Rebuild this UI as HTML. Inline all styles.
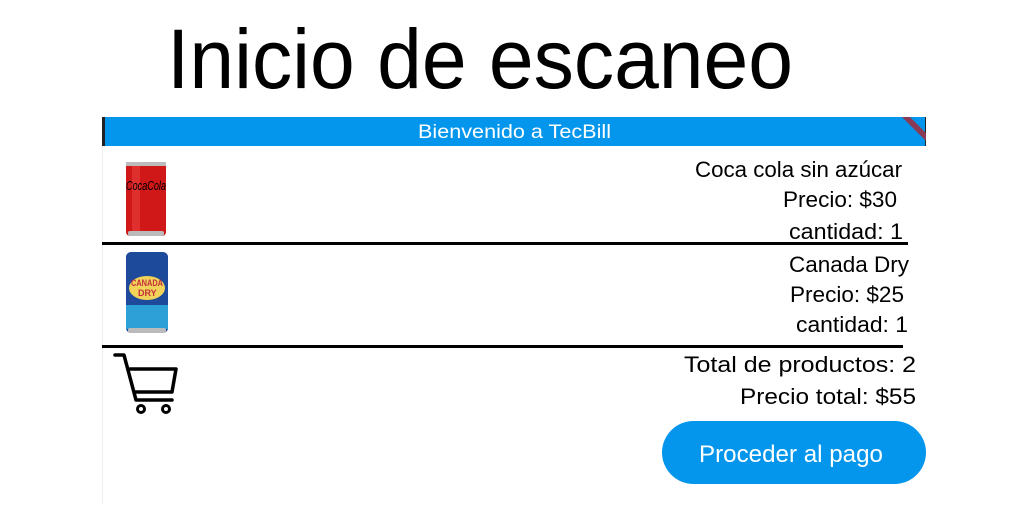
<!DOCTYPE html>
<html><head><meta charset="utf-8"><style>
html,body{margin:0;padding:0;background:#fff;width:1024px;height:509px;overflow:hidden}
svg{display:block}
text{font-family:"Liberation Sans",sans-serif;fill:#000}
</style></head><body>
<svg width="1024" height="509" viewBox="0 0 1024 509">
<rect width="1024" height="509" fill="#fff"/>
<text x="167" y="88" font-size="84" textLength="626" lengthAdjust="spacingAndGlyphs">Inicio de escaneo</text>
<rect x="102" y="117" width="824" height="29" fill="#0496ec"/>
<rect x="102" y="117" width="3" height="29" fill="#222"/>
<rect x="925" y="117" width="1" height="29" fill="#222"/>
<rect x="102" y="146" width="1" height="358" fill="#eee"/>
<polygon points="902,117 910,117 926,133 926,141" fill="#8a3a55"/>
<text x="418" y="138" font-size="19" style="fill:#fff" textLength="193" lengthAdjust="spacingAndGlyphs">Bienvenido a TecBill</text>
<rect x="126" y="162" width="40" height="74" rx="4" fill="#d11818"/>
<rect x="126" y="162" width="40" height="4" fill="#bbb"/>
<rect x="128" y="231" width="36" height="5" rx="2" fill="#bbb"/>
<rect x="132" y="166" width="8" height="65" fill="#e84040" opacity=".6"/>
<text x="126" y="190" font-size="13" font-style="italic" textLength="40" lengthAdjust="spacingAndGlyphs">CocaCola</text>
<rect x="126" y="252" width="42" height="81" rx="5" fill="#1d4a9a"/>
<rect x="126" y="305" width="42" height="24" fill="#2ea0d8"/>
<rect x="128" y="328" width="38" height="5" rx="2" fill="#bbb"/>
<ellipse cx="147" cy="288" rx="18" ry="12" fill="#f2d35a"/>
<text x="131" y="286" font-size="9" style="fill:#c2303a" font-weight="bold" textLength="32" lengthAdjust="spacingAndGlyphs">CANADA</text>
<text x="138" y="296" font-size="9" style="fill:#c2303a" font-weight="bold">DRY</text>
<text x="695" y="177" font-size="22" textLength="207" lengthAdjust="spacingAndGlyphs">Coca cola sin azúcar</text>
<text x="783" y="207" font-size="22" textLength="114" lengthAdjust="spacingAndGlyphs">Precio: $30</text>
<text x="789" y="239" font-size="22" textLength="114" lengthAdjust="spacingAndGlyphs">cantidad: 1</text>
<rect x="102" y="242" width="806" height="3" fill="#000"/>
<text x="789" y="272" font-size="22" textLength="120" lengthAdjust="spacingAndGlyphs">Canada Dry</text>
<text x="790" y="302" font-size="22" textLength="114" lengthAdjust="spacingAndGlyphs">Precio: $25</text>
<text x="796" y="332" font-size="22" textLength="112" lengthAdjust="spacingAndGlyphs">cantidad: 1</text>
<rect x="102" y="345" width="801" height="3" fill="#000"/>
<g fill="none" stroke="#000" stroke-width="3.5" stroke-linecap="round" stroke-linejoin="round">
<path d="M115,355 H124 L136,400 H172"/>
<path d="M130,369 H176 L172,392 H135"/>
</g>
<circle cx="141" cy="409" r="3.5" fill="none" stroke="#000" stroke-width="3"/>
<circle cx="166" cy="409" r="3.5" fill="none" stroke="#000" stroke-width="3"/>
<text x="684" y="372" font-size="22" textLength="232" lengthAdjust="spacingAndGlyphs">Total de productos: 2</text>
<text x="740" y="404" font-size="22" textLength="176" lengthAdjust="spacingAndGlyphs">Precio total: $55</text>
<rect x="662" y="421" width="264" height="63" rx="31.5" fill="#0496ec"/>
<text x="699" y="462" font-size="24" style="fill:#fff" textLength="184" lengthAdjust="spacingAndGlyphs">Proceder al pago</text>
</svg>
</body></html>
